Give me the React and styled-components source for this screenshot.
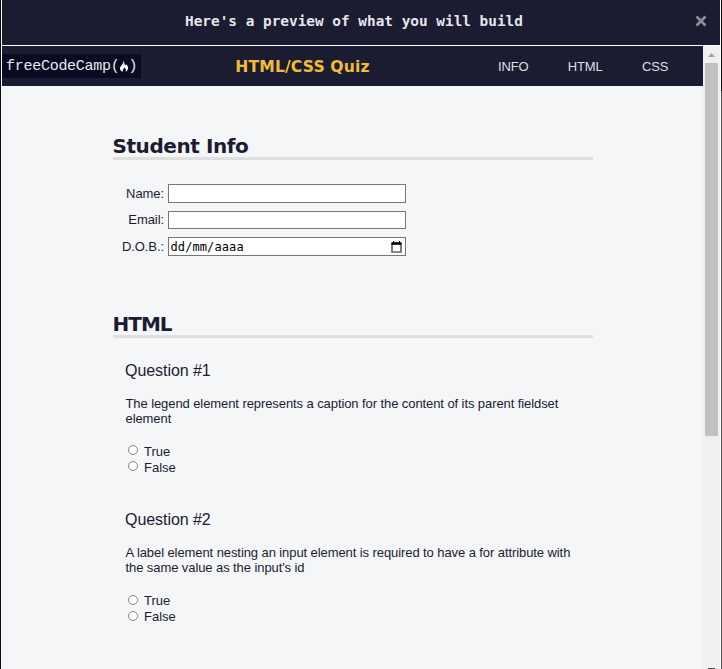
import React from "react";
import styled, { createGlobalStyle } from "styled-components";

const Global = createGlobalStyle`
  * { box-sizing: border-box; }
  body { margin: 0; background: #0a0a23; overflow: hidden; font-family: "Liberation Sans", Arial, sans-serif; color: #1b1b32; }
  h1, h2, h3, p { margin: 0; font-weight: normal; }
`;

const Backdrop = styled.div`
  display: flex; height: 669px; padding-left: 1px;
  background: linear-gradient(to bottom, #0a0a12 91px, #555558 91px) right / 1px 100% no-repeat, #0a0a23;
`;
const Modal = styled.div`
  height: 669px; width: 720px;
  border-left: 1px solid #fff; border-right: 1px solid #fff;
  display: flex; flex-direction: column; background: #f5f6f7;
`;
const ModalHeader = styled.header`
  height: 46px; flex: none; display: grid; grid-template-columns: 1fr 37px; align-items: center;
  background: #1b1b32; border-bottom: 1px solid #fff;
`;
const ModalTitle = styled.h2`
  padding: 0 0 3px 23px; text-align: center; color: #e6e6ea; white-space: nowrap;
  font: bold 14.4px/20px "DejaVu Sans Mono", monospace;
`;
const CloseButton = styled.button`
  border: 0; padding: 0; margin: 0 0 4px 12px; width: 12px; height: 12px; background: none; display: block;
  svg { display: block; }
`;
const Viewport = styled.div`
  flex: 1; min-height: 0; display: grid; grid-template-columns: 701px 17px; overflow: hidden;
`;
const Page = styled.div`min-width: 0; overflow: hidden;`;
const NavBar = styled.header`
  height: 40px; background: #1b1b32; display: grid; align-items: center;
  grid-template-columns: 139px 323px 1fr;
`;
const Logo = styled.div`
  height: 24px; display: flex; align-items: center; padding: 1px 0 0 4px; background: #0a0a23; color: #e8e8ec;
  font: 15px/23px "Liberation Mono", monospace; letter-spacing: -0.27px; white-space: pre;
  svg { flex: none; margin: 0 0 0 -1px; }
`;
const SiteTitle = styled.h1`
  padding-top: 2px; text-align: center; color: #f1be32; letter-spacing: 0.15px;
  font: bold 15.6px/24px "DejaVu Sans", Verdana, sans-serif;
`;
const Links = styled.nav`
  display: flex; gap: 39.4px; padding: 1px 0 0 34px; color: #dfdfe2; font-size: 13px; line-height: 20px; letter-spacing: -0.15px;
`;
const Main = styled.main`width: 480px; margin-left: 111px;`;
const Section = styled.section`
  height: ${(p) => p.$height}px; padding-top: 46px;
`;
const SectionTitle = styled.h2`
  height: 28px; border-bottom: 3px solid #dfdfe2; letter-spacing: ${(p) => p.$tracking}px; text-indent: -0.5px;
  font: bold 20px/28px "DejaVu Sans", Verdana, sans-serif;
`;
const Fields = styled.div`padding-top: 24px; display: grid; row-gap: 8px;`;
const Field = styled.label`
  display: grid; grid-template-columns: 51px 238px; column-gap: 4px; align-items: center;
  height: ${(p) => p.$height}px; font-size: 13px; line-height: 17px; letter-spacing: -0.08px; text-align: right;
`;
const FieldName = styled.span`padding-bottom: ${(p) => p.$lift || 0}px;`;
const Input = styled.span`
  height: 100%; border: 1px solid #767676; background: #fff; color: #000; letter-spacing: 0.1px;
  display: flex; align-items: center; justify-content: space-between; padding: 0 3px 0 1.5px;
  font: 12px/16px "DejaVu Sans Mono", monospace;
`;
const Question = styled.article`height: 149px; padding: 23px 0 0 12px;`;
const Legend = styled.h3`font-size: 16px; line-height: 20px; letter-spacing: -0.06px;`;
const Prompt = styled.p`
  margin: 15px 0 18px 0.5px; font-size: 13px; line-height: 15px; letter-spacing: -0.085px; white-space: nowrap;
`;
const Option = styled.label`
  display: flex; align-items: center; gap: 6px; height: 16px; padding-left: 3px; font-size: 13px; line-height: 16px;
`;
const Radio = styled.span`
  width: 10px; height: 10px; margin-top: ${(p) => (p.$raised ? -4 : -2)}px;
  border: 1px solid #858585; border-radius: 50%; background: #fff;
`;
const ScrollTrack = styled.div`
  background: #f0f0f0; display: flex; flex-direction: column; align-items: center; padding-top: 7px;
`;
const Thumb = styled.div`width: 13px; height: 373px; margin-top: 6px; background: #c1c1c1; flex: none;`;
const ScrollDown = styled.div`width: 7px; height: 1px; margin-top: auto; background: #505050;`;

const Flame = () => (
  <svg width="10" height="13" viewBox="0 0 11 14">
    <path d="M5 .5C6.2 2.6 5.4 4 6.8 6L8 4.6C10.8 8 10.8 10.5 7.2 13 8.4 10.4 7 9.4 5.8 7.8 5.6 9.6 3.4 10 4.2 13-1.2 10 1.4 7.2 3.4 5 4.6 3.6 5 2.4 5 .5Z" fill="#fff" />
  </svg>
);
const Calendar = () => (
  <svg width="11" height="12" viewBox="0 0 11 12">
    <path d="M1 2.5h9v8.5H1z" fill="none" stroke="#666" strokeWidth="1.7" />
    <path d="M0.5 1.2h10v2.6h-10zM2 0h1v2H2zM8 0h1v2H8z" />
  </svg>
);

const QUESTIONS = [
  ["Question #1", "The legend element represents a caption for the content of its parent fieldset", "element"],
  ["Question #2", "A label element nesting an input element is required to have a for attribute with", "the same value as the input's id"],
];

export default function App() {
  return (
    <>
      <Global />
      <Backdrop>
        <Modal>
          <ModalHeader>
            <ModalTitle>Here's a preview of what you will build</ModalTitle>
            <CloseButton aria-label="Close">
              <svg width="12" height="12" viewBox="0 0 12 12"><path d="M1.5 1.5l9 9M10.5 1.5l-9 9" stroke="#8d8d98" strokeWidth="2.8" /></svg>
            </CloseButton>
          </ModalHeader>
          <Viewport>
            <Page>
              <NavBar>
                <Logo><span>freeCodeCamp(</span><Flame /><span>)</span></Logo>
                <SiteTitle>HTML/CSS Quiz</SiteTitle>
                <Links><span>INFO</span><span>HTML</span><span>CSS</span></Links>
              </NavBar>
              <Main>
                <Section $height={178}>
                  <SectionTitle $tracking={-0.42}>Student Info</SectionTitle>
                  <Fields>
                    <Field $height={19}><FieldName>Name:</FieldName><Input /></Field>
                    <Field $height={18}><FieldName $lift={1}>Email:</FieldName><Input /></Field>
                    <Field $height={19}><FieldName>D.O.B.:</FieldName><Input>dd/mm/aaaa<Calendar /></Input></Field>
                  </Fields>
                </Section>
                <Section $height={405}>
                  <SectionTitle $tracking={-1}>HTML</SectionTitle>
                  {QUESTIONS.map(([title, a, b], i) => (
                    <Question key={title}>
                      <Legend>{title}</Legend>
                      <Prompt>{a}<br />{b}</Prompt>
                      <Option><Radio $raised={i === 0} />True</Option>
                      <Option><Radio $raised={i === 0} />False</Option>
                    </Question>
                  ))}
                </Section>
              </Main>
            </Page>
            <ScrollTrack>
              <svg width="7" height="4" viewBox="0 0 7 4"><path d="M0 4 3.5 0 7 4z" fill="#a3a3a3" /></svg>
              <Thumb />
              <ScrollDown />
            </ScrollTrack>
          </Viewport>
        </Modal>
      </Backdrop>
    </>
  );
}
